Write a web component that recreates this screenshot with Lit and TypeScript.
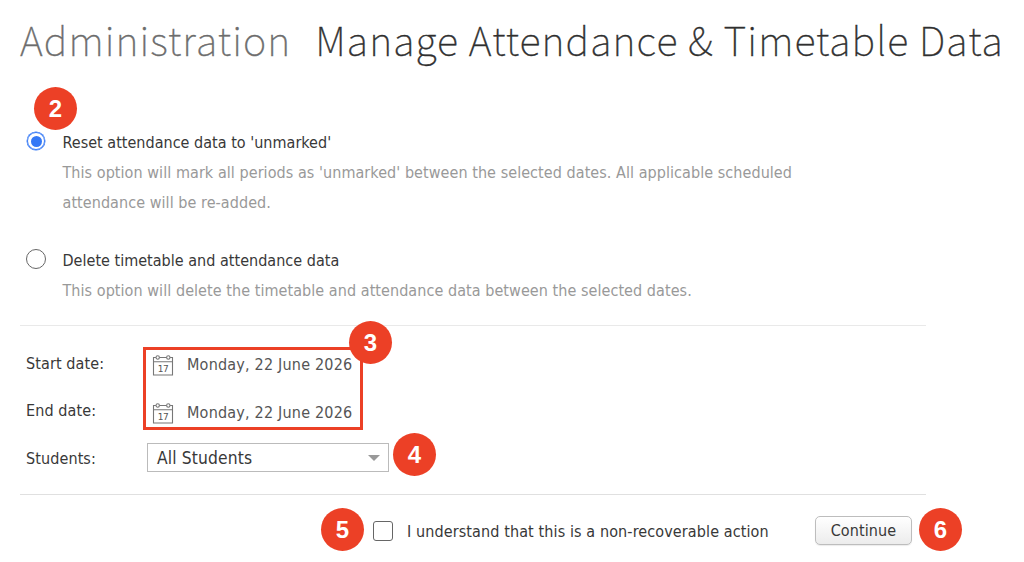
/**
 * Manage Attendance & Timetable Data page
 */

import { LitElement, html, css } from 'lit';
import { customElement, property, state } from 'lit/decorators.js';

type ResetMode = 'reset' | 'delete';

@customElement('step-badge')
export class StepBadge extends LitElement {
  static styles = css`
    :host {
      display: flex;
      align-items: center;
      justify-content: center;
      width: 43px;
      height: 43px;
      border-radius: 50%;
      background: #ec4026;
      color: #fff;
      font-family: 'Liberation Sans', Arial, sans-serif;
      font-size: 24px;
      font-weight: 700;
      line-height: 43px;
      letter-spacing: 0;
    }
  `;

  @property({ type: Number })
  step = 1;

  render() {
    return html`<span>${this.step}</span>`;
  }
}

@customElement('date-field')
export class DateField extends LitElement {
  static styles = css`
    :host {
      display: flex;
      align-items: center;
      gap: 13px;
      color: #555;
      letter-spacing: 0.2px;
      white-space: nowrap;
    }

    .icon {
      width: 22px;
      height: 22px;
      flex: none;
    }

    .day {
      font-family: 'DejaVu Sans', sans-serif;
      font-size: 9px;
      letter-spacing: -0.4px;
    }
  `;

  @property({ type: String })
  value = '';

  render() {
    return html`
      <svg class="icon" viewBox="0 0 22 22" fill="none" stroke="#777" stroke-width="1.1">
        <path d="M3.9 3.5H1.5V21H20.5V3.5H18.1M7.5 3.5H14.5M1.5 7.8H20.5"/>
        <circle cx="5.7" cy="3.5" r="1.7"/>
        <circle cx="16.3" cy="3.5" r="1.7"/>
        <text class="day" x="5.8" y="17.7" fill="#555" stroke="none">17</text>
      </svg>
      <span>${this.value}</span>
    `;
  }
}

@customElement('app-root')
export class AppRoot extends LitElement {
  static styles = css`
    :host {
      display: block;
      box-sizing: border-box;
      height: 562px;
      padding-left: 20px;
      overflow: hidden;
      background: #fff;
      color: #383838;
      font-family: 'DejaVu Sans Condensed', 'Noto Sans', sans-serif;
      font-size: 16px;
      letter-spacing: 0.06px;
    }

    .title {
      display: flex;
      gap: 24px;
      height: 84px;
      margin: 0;
      color: #2f2f2f;
      font-family: 'Noto Sans CJK SC', sans-serif;
      font-size: 39.6px;
      font-weight: 100;
      line-height: 78px;
      letter-spacing: 1.09px;
      white-space: nowrap;
      -webkit-text-stroke: 0.4px currentColor;
    }

    .section {
      color: #6c6c6c;
    }

    .content {
      width: 906px;
    }

    .options {
      display: flex;
      flex-direction: column;
      gap: 28px;
      height: 197px;
      padding-top: 44px;
      border-bottom: 1px solid #e9e9e9;
    }

    .option {
      position: relative;
      display: grid;
      grid-template-columns: 42.5px 745px;
      line-height: 30px;
    }

    .option-label {
      letter-spacing: 0.02px;
    }

    .radio {
      box-sizing: border-box;
      display: flex;
      width: 20px;
      height: 20px;
      margin: 3px 0 0 6px;
      border: 1px solid #666;
      border-radius: 50%;
    }

    .radio.checked {
      width: 18px;
      height: 18px;
      margin: 4px 0 0 7px;
      border-color: #3478f6;
      box-shadow: 0 0 0 0.5px #3478f6;
    }

    .radio.checked::after {
      content: '';
      width: 11px;
      height: 11px;
      margin: auto;
      border-radius: 50%;
      background: #3478f6;
    }

    .description {
      grid-column: 2;
      color: #999;
    }

    .fields {
      display: grid;
      grid-template-columns: 123px 220px;
      grid-template-rows: 83px 30px;
      row-gap: 13px;
      height: 147px;
      padding-top: 21px;
      box-sizing: content-box;
      border-bottom: 1px solid #e0e0e0;
    }

    .labels {
      padding: 2px 0 0 6px;
      line-height: 30px;
      letter-spacing: 0.1px;
    }

    .labels > div + div {
      margin-top: 17px;
    }

    .dates {
      position: relative;
      box-sizing: border-box;
      display: flex;
      flex-direction: column;
      gap: 18px;
      padding: 0 0 0 6px;
      border: 3px solid #ec4026;
      line-height: 30px;
    }

    .students-label {
      padding-left: 6px;
      line-height: 31px;
      letter-spacing: 0.1px;
    }

    .students {
      position: relative;
      box-sizing: border-box;
      display: flex;
      align-items: center;
      justify-content: space-between;
      width: 242px;
      height: 29px;
      margin-left: 4px;
      padding: 0 8px 0 9px;
      border: 1px solid #bbb;
      font-size: 17.3px;
      letter-spacing: 0.15px;
      white-space: nowrap;
    }

    .arrow {
      width: 12px;
      height: 6px;
    }

    .footer {
      display: flex;
      align-items: center;
      height: 43px;
      padding: 13px 0 0 301px;
      white-space: nowrap;
    }

    .checkbox {
      box-sizing: border-box;
      width: 20px;
      height: 20px;
      margin: 3px 0 0 9px;
      border: 1px solid #666;
      border-radius: 3px;
    }

    .confirm {
      width: 408px;
      margin: 3px 0 0 14px;
      letter-spacing: 0.11px;
    }

    .continue {
      box-sizing: border-box;
      width: 97px;
      height: 29px;
      margin: 2px 7px 0 0;
      padding: 0;
      border: 1px solid #bdbdbd;
      border-radius: 5px;
      background: linear-gradient(#fff, #ececec);
      box-shadow: 0 1px 1px rgba(0, 0, 0, 0.08);
      color: #383838;
      font: inherit;
      letter-spacing: 0.1px;
    }

    /* step markers sit over the form */
    .badge-mode { position: absolute; left: 14px; top: -41px; }
    .badge-dates { position: absolute; right: -32px; top: -29px; }
    .badge-students { position: absolute; right: -48px; top: -11px; }
  `;

  @state()
  private _mode: ResetMode = 'reset';

  private _renderRadio(mode: ResetMode) {
    return html`
      <span
        class="radio ${this._mode === mode ? 'checked' : ''}"
        role="radio"
        aria-checked=${this._mode === mode}
        @click=${() => (this._mode = mode)}
      ></span>
    `;
  }

  render() {
    return html`
      <h1 class="title">
        <span class="section">Administration</span>
        <span>Manage Attendance &amp; Timetable Data</span>
      </h1>
      <div class="content">
        <div class="options">
          <div class="option">
            ${this._renderRadio('reset')}
            <span class="option-label">Reset attendance data to 'unmarked'</span>
            <div class="description">
              This option will mark all periods as 'unmarked' between the selected dates. All applicable scheduled
              attendance will be re-added.
            </div>
            <step-badge class="badge-mode" step="2"></step-badge>
          </div>
          <div class="option">
            ${this._renderRadio('delete')}
            <span class="option-label">Delete timetable and attendance data</span>
            <div class="description">
              This option will delete the timetable and attendance data between the selected dates.
            </div>
          </div>
        </div>
        <div class="fields">
          <div class="labels">
            <div>Start date:</div>
            <div>End date:</div>
          </div>
          <div class="dates">
            <date-field value="Monday, 22 June 2026"></date-field>
            <date-field value="Monday, 22 June 2026"></date-field>
            <step-badge class="badge-dates" step="3"></step-badge>
          </div>
          <div class="students-label">Students:</div>
          <div class="students">
            <span>All Students</span>
            <svg class="arrow" viewBox="0 0 12 6"><path d="M0 0H12L6 6Z" fill="#999"/></svg>
            <step-badge class="badge-students" step="4"></step-badge>
          </div>
        </div>
      </div>
      <div class="footer">
        <step-badge step="5"></step-badge>
        <span class="checkbox" role="checkbox" aria-checked="false"></span>
        <span class="confirm">I understand that this is a non-recoverable action</span>
        <button class="continue">Continue</button>
        <step-badge step="6"></step-badge>
      </div>
    `;
  }
}

declare global {
  interface HTMLElementTagNameMap {
    'step-badge': StepBadge;
    'date-field': DateField;
    'app-root': AppRoot;
  }
}
